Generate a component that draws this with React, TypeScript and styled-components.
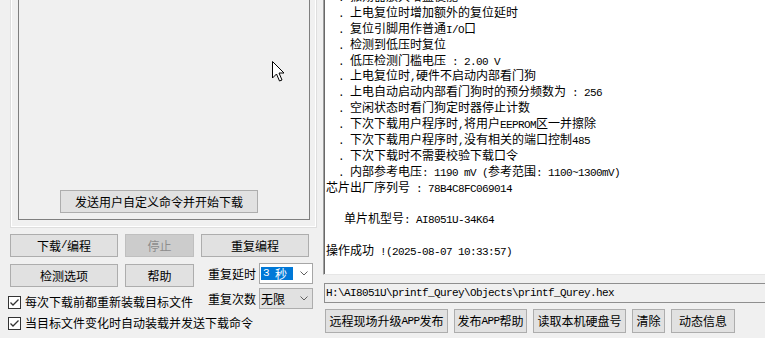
import React from "react";
import styled, { createGlobalStyle } from "styled-components";

const CJK = `"Noto Sans CJK SC", "Noto Sans", sans-serif`;
const MONO = `"Liberation Mono", "DejaVu Sans Mono", monospace`;

const GlobalStyle = createGlobalStyle`
  html, body { margin: 0; padding: 0; background: #f0f0f0; }
  body { font-family: ${CJK}; }
  * { box-sizing: border-box; }
`;

const Window = styled.div`
  position: relative;
  width: 765px;
  height: 338px;
  overflow: hidden;
  display: flex;
  background: #f0f0f0;
  font-family: ${CJK};
  font-size: 12px;
  color: #000;
`;

const Latin = styled.span`
  font-family: ${MONO};
  font-size: 11px;
  letter-spacing: -0.6px;
`;

function Mixed({ text }: { text: string }) {
  const parts = text.split(/([\x00-\x7f]+)/).filter((p) => p.length > 0);
  return (
    <>
      {parts.map((p, i) =>
        /^[\x00-\x7f]+$/.test(p) ? <Latin key={i}>{p}</Latin> : <React.Fragment key={i}>{p}</React.Fragment>
      )}
    </>
  );
}

/* ---------- left column ---------- */
const LeftColumn = styled.div`
  width: 318px;
  flex: none;
  display: flex;
  flex-direction: column;
`;

const OuterGroup = styled.div`
  margin: -20px 0 0 10px;
  width: 307px;
  height: 248px;
  border: 1px solid #dedede;
  box-shadow: inset 0 0 0 1px #ffffff;
  padding: 0 6px 7px 7px;
  display: flex;
`;

const InnerBox = styled.div`
  flex: 1;
  border: 1px solid #7f7f7f;
  display: flex;
  flex-direction: column;
  justify-content: flex-end;
  padding: 0 0 6px 41px;
`;

const Button = styled.button<{ $w: number; $h?: number; $disabled?: boolean }>`
  width: ${(p) => p.$w}px;
  height: ${(p) => p.$h ?? 23}px;
  flex: none;
  padding: 0;
  margin: 0;
  border: 1px solid ${(p) => (p.$disabled ? "#bfbfbf" : "#adadad")};
  background: ${(p) => (p.$disabled ? "#cccccc" : "#e1e1e1")};
  color: ${(p) => (p.$disabled ? "#8d8d8d" : "#000")};
  font-family: ${CJK};
  font-size: 12px;
  line-height: 1;
  display: flex;
  align-items: center;
  justify-content: center;
  white-space: pre;
`;

const ButtonRow = styled.div<{ $gap: number; $top: number; $left: number }>`
  display: flex;
  gap: ${(p) => p.$gap}px;
  margin-top: ${(p) => p.$top}px;
  margin-left: ${(p) => p.$left}px;
`;

const Middle = styled.div`
  display: flex;
  margin-top: 6px;
  padding-left: 8px;
`;

const LeftStack = styled.div`
  width: 200px;
  display: flex;
  flex-direction: column;
`;

const RightStack = styled.div`
  display: flex;
  flex-direction: column;
  gap: 4px;
`;

const FieldRow = styled.div`
  display: flex;
  align-items: center;
  gap: 3px;
  height: 21px;
`;

const FieldLabel = styled.span`
  width: 48px;
  line-height: 1;
  white-space: nowrap;
`;

const Combo = styled.div<{ $editable?: boolean }>`
  width: 54px;
  height: 21px;
  border: 1px solid ${(p) => (p.$editable ? "#a6a6a6" : "#adadad")};
  background: ${(p) => (p.$editable ? "#ffffff" : "#e1e1e1")};
  display: flex;
  align-items: center;
  padding-left: 1px;
  padding-right: 4px;
`;

const ComboText = styled.span<{ $selected?: boolean }>`
  flex: 1;
  line-height: 13px;
  height: 13px;
  white-space: pre;
  display: flex;
  align-items: center;
  ${(p) =>
    p.$selected
      ? `
    flex: none;
    width: 32px;
    background: #0078d7;
    color: #fff;
    padding-left: 2px;
  `
      : ``}
`;

const Spacer = styled.span`
  flex: 1;
`;

function Chevron() {
  return (
    <svg width="8" height="5" viewBox="0 0 8 5" style={{ flex: "none" }}>
      <polyline points="0.5,0.5 4,4 7.5,0.5" fill="none" stroke="#606060" strokeWidth="1" />
    </svg>
  );
}

const CheckRow = styled.label<{ $top: number }>`
  display: flex;
  align-items: center;
  gap: 4px;
  height: 16px;
  margin-top: ${(p) => p.$top}px;
  white-space: nowrap;
  line-height: 1;
`;

const CheckBox = styled.span`
  width: 13px;
  height: 13px;
  flex: none;
  border: 1px solid #333;
  background: #fff;
  display: flex;
  align-items: center;
  justify-content: center;
`;

function Check({ label, top }: { label: string; top: number }) {
  return (
    <CheckRow $top={top}>
      <CheckBox>
        <svg width="11" height="11" viewBox="0 0 11 11">
          <polyline points="1.5,5.5 4,8 9.5,2.5" fill="none" stroke="#333" strokeWidth="1.3" />
        </svg>
      </CheckBox>
      {label}
    </CheckRow>
  );
}

/* ---------- right column ---------- */
const RightColumn = styled.div`
  flex: 1;
  min-width: 0;
  margin-left: 5px;
  display: flex;
  flex-direction: column;
`;

const LogArea = styled.div`
  height: 275px;
  margin-right: -12px;
  background: #fff;
  border-left: 1px solid #a0a0a0;
  border-bottom: 1px solid #e6e6e6;
  box-shadow: inset 1px 0 0 #696969;
  overflow: hidden;
  padding-left: 2px;
`;

const LogContent = styled.div`
  margin-top: -12px;
`;

const LogLine = styled.div`
  height: 15.9px;
  line-height: 15.9px;
  white-space: pre;
`;

const PathBox = styled.div`
  margin: 8px -12px 0 1px;
  height: 20px;
  border: 1px solid #8f8f8f;
  background: #f0f0f0;
  padding-left: 1px;
  display: flex;
  align-items: center;
  font-family: ${MONO};
  font-size: 11px;
  letter-spacing: -0.6px;
  white-space: pre;
`;

const Cursor = styled.svg`
  position: absolute;
  left: 272px;
  top: 61px;
`;

const logLines = [
  "  . 振荡器放大增益使能",
  "  . 上电复位时增加额外的复位延时",
  "  . 复位引脚用作普通I/O口",
  "  . 检测到低压时复位",
  "  . 低压检测门槛电压 : 2.00 V",
  "  . 上电复位时,硬件不启动内部看门狗",
  "  . 上电自动启动内部看门狗时的预分频数为 : 256",
  "  . 空闲状态时看门狗定时器停止计数",
  "  . 下次下载用户程序时,将用户EEPROM区一并擦除",
  "  . 下次下载用户程序时,没有相关的端口控制485",
  "  . 下次下载时不需要校验下载口令",
  "  . 内部参考电压: 1190 mV (参考范围: 1100~1300mV)",
  "芯片出厂序列号 : 78B4C8FC069014",
  "",
  "   单片机型号: AI8051U-34K64",
  "",
  "操作成功 !(2025-08-07 10:33:57)",
];

const bottomButtons: { label: string; w: number }[] = [
  { label: "远程现场升级APP发布", w: 123 },
  { label: "发布APP帮助", w: 73 },
  { label: "读取本机硬盘号", w: 93 },
  { label: "清除", w: 33 },
  { label: "动态信息", w: 64 },
];

export default function App() {
  return (
    <>
      <GlobalStyle />
      <Window>
        <LeftColumn>
          <OuterGroup>
            <InnerBox>
              <Button $w={198}>发送用户自定义命令并开始下载</Button>
            </InnerBox>
          </OuterGroup>

          <ButtonRow $gap={7} $top={6} $left={10}>
            <Button $w={108}>
              <Mixed text="下载/编程" />
            </Button>
            <Button $w={69} $disabled>
              停止
            </Button>
            <Button $w={108}>重复编程</Button>
          </ButtonRow>

          <Middle>
            <LeftStack>
              <ButtonRow $gap={7} $top={1} $left={2}>
                <Button $w={108}>检测选项</Button>
                <Button $w={69}>帮助</Button>
              </ButtonRow>
              <Check label="每次下载前都重新装载目标文件" top={7} />
            </LeftStack>
            <RightStack>
              <FieldRow>
                <FieldLabel>重复延时</FieldLabel>
                <Combo $editable>
                  <ComboText $selected>
                    <Mixed text="3 秒" />
                  </ComboText>
                  <Spacer />
                  <Chevron />
                </Combo>
              </FieldRow>
              <FieldRow>
                <FieldLabel>重复次数</FieldLabel>
                <Combo>
                  <ComboText>无限</ComboText>
                  <Chevron />
                </Combo>
              </FieldRow>
            </RightStack>
          </Middle>

          <ButtonRow $gap={0} $top={0} $left={8}>
            <Check label="当目标文件变化时自动装载并发送下载命令" top={5} />
          </ButtonRow>
        </LeftColumn>

        <RightColumn>
          <LogArea>
            <LogContent>
              {logLines.map((l, i) => (
                <LogLine key={i}>
                  <Mixed text={l} />
                </LogLine>
              ))}
            </LogContent>
          </LogArea>
          <PathBox>H:\AI8051U\printf_Qurey\Objects\printf_Qurey.hex</PathBox>
          <ButtonRow $gap={6} $top={6} $left={2}>
            {bottomButtons.map((b) => (
              <Button key={b.label} $w={b.w} $h={24}>
                <Mixed text={b.label} />
              </Button>
            ))}
          </ButtonRow>
        </RightColumn>

        <Cursor width="13" height="21" viewBox="0 0 13 21">
          <path
            d="M0.5 0.5 L0.5 17 L4.5 13 L7.5 20 L10 19 L7 12 L12 12 Z"
            fill="#fff"
            stroke="#000"
            strokeWidth="1"
            strokeLinejoin="miter"
          />
        </Cursor>
      </Window>
    </>
  );
}
